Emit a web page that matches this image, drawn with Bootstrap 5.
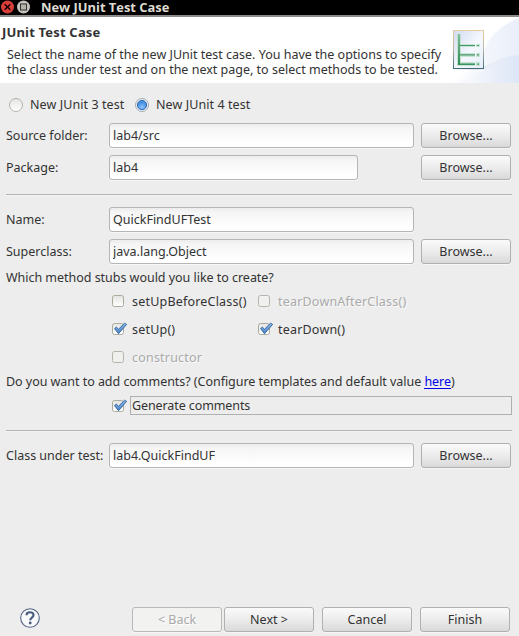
<!DOCTYPE html>
<html lang="en">
<head>
<meta charset="utf-8">
<meta name="viewport" content="width=device-width, initial-scale=1">
<title>New JUnit Test Case</title>
<link href="https://cdn.jsdelivr.net/npm/bootstrap@5.3.0/dist/css/bootstrap.min.css" rel="stylesheet">
<style>
  body { font-family: "Noto Sans", "Open Sans", sans-serif; font-size: 12.5px; line-height: 18px; color: #333; background: #ededed; }
  .dialog { width: 519px; height: 636px; }
  .titlebar { height: 17px; background: #000; border-bottom: 2px solid #8d8a88; color: #dfdbd2; font-family: "Open Sans", sans-serif; font-weight: 700; font-size: 12.9px; line-height: 15px; }
  .win-icons { width: 41px; height: 15px; }
  .banner { height: 66px; background: #fff; }
  .banner-title { font-weight: 700; padding: 6px 0 0 2px; line-height: 18px; font-size: 13px; letter-spacing: .18px; }
  .banner-copy { padding: 6px 0 0 7px; line-height: 15px; }
  .page { padding-left: 6px; }
  .versions { height: 40px; padding-top: 4px; }
  .version { width: 126px; letter-spacing: .08px; }
  .line { height: 25px; margin-bottom: 7px; padding-right: 8px; }
  .caption { width: 103px; }
  .form-control.field { width: 305px; height: 25px; min-height: 0; padding: 0 3px; font-size: inherit; line-height: 23px; color: #333; border: 1px solid #b5b5b5; border-radius: 3px; background: linear-gradient(#ececec 0, #f5f5f5 4px, #fff 20px); box-shadow: 0 1px 0 #f8f8f8; }
  .form-control.field-short { width: 249px; }
  .btn.push { width: 90px; height: 25px; padding: 0; font-size: inherit; line-height: 22px; color: #333; border: 1px solid #b0b0b0; border-radius: 3px; background: linear-gradient(#fafafa, #ececec 50%, #d9d9d9); box-shadow: 0 1px 0 #f6f6f6; }
  .btn.push:disabled { color: #a9a9a9; background: #f2f2f1; border-color: #b9b9b9; opacity: 1; text-shadow: 1px 1px #fff; }
  .btn.next { margin-left: 2px; }
  .rule { height: 2px; margin: 7px 7px 11px 0; background: linear-gradient(#b3b3b3 50%, #f4f4f4 50%); }
  .rule-low { margin-top: 15px; }
  .question { line-height: 13px; margin-bottom: 3px; letter-spacing: -.03px; }
  .question-low { line-height: 21px; margin-bottom: 4px; letter-spacing: -.04px; }
  .stubs { padding-left: 103px; }
  .stub { height: 28px; }
  .stub > .pick { width: 146px; }
  .pick span { margin: 1px 0 0 3px; letter-spacing: .2px; }
  .off { color: #aaa; text-shadow: 1px 1px #fafafa; }
  .tick { width: 20px; height: 18px; }
  .focus-row { height: 19px; padding-left: 103px; }
  .focus-box { width: 382px; height: 19px; border: 1px solid #b0b0b0; line-height: 17px; padding-left: 1px; margin-left: 1px; letter-spacing: -.1px; }
  .here { color: #00e; text-decoration: none; border-bottom: 1px solid #00e; line-height: 13px; display: inline-block; }
  .actions { height: 29px; padding: 0 9px 4px 14px; }
  .help { margin-bottom: 3px; }
</style>
<script src="https://cdn.jsdelivr.net/npm/bootstrap@5.3.0/dist/js/bootstrap.bundle.min.js" defer></script>
</head>
<body>
<svg width="0" height="0" class="d-block">
  <defs>
    <linearGradient id="boxFill" x2="0" y2="1"><stop stop-color="#e4e4e2"/><stop offset="1" stop-color="#fff"/></linearGradient>
    <linearGradient id="tickFill" x2="0" y2="1"><stop stop-color="#8bb9e8"/><stop offset="1" stop-color="#4a86c8"/></linearGradient>
    <radialGradient id="blue" cy=".75"><stop stop-color="#8cc5ff"/><stop offset="1" stop-color="#4a90e0"/></radialGradient>
    <g id="box"><rect x="3.5" y="3.5" width="11" height="11" rx="2" fill="url(#boxFill)" stroke="#a9ab9f"/></g>
    <g id="boxOff"><rect x="3.5" y="3.5" width="11" height="11" rx="2" fill="#f0f0ef" stroke="#b4b6ab"/></g>
    <g id="boxOn"><use href="#box"/><path d="M5.6 8.6 7.3 7.1 9.5 9.2 15.6 3.2 17.6 4.4 9.5 13.7Z" fill="url(#tickFill)" stroke="#2c5e9b" stroke-linejoin="round" stroke-width=".9"/></g>
  </defs>
</svg>
<main class="dialog d-flex flex-column overflow-hidden">
  <header class="titlebar d-flex flex-shrink-0">
    <svg class="win-icons flex-shrink-0" viewBox="0 0 41 15">
      <circle cx="7.5" cy="7" r="6.5" fill="#d93e3a"/><path d="m4.7 4.2 5.6 5.6m0-5.6-5.6 5.6" stroke="#1c0000" stroke-width="1.5"/>
      <circle cx="23.5" cy="7" r="6.5" fill="#c5c2bc"/><rect x="20.5" y="4" width="6" height="6" fill="#b5b2ac" stroke="#333"/>
    </svg>
    <span>New JUnit Test Case</span>
  </header>
  <section class="banner d-flex flex-shrink-0">
    <div class="flex-grow-1 text-nowrap">
      <div class="banner-title">JUnit Test Case</div>
      <div class="banner-copy">
        <div>Select the name of the new JUnit test case. You have the options to specify</div>
        <div>the class under test and on the next page, to select methods to be tested.</div>
      </div>
    </div>
    <svg class="flex-shrink-0" width="75" height="66" viewBox="444 17 75 66">
      <defs>
        <linearGradient id="sky" x1="0" x2="1"><stop stop-color="#fff"/><stop offset="1" stop-color="#dde5f6"/></linearGradient>
        <linearGradient id="paper" x2="1" y2="1"><stop stop-color="#d2dbef"/><stop offset=".55" stop-color="#f5f8fe"/><stop offset="1" stop-color="#e6edfa"/></linearGradient>
        <linearGradient id="frame" x2="0" y2="1"><stop stop-color="#e5cd9e"/><stop offset=".5" stop-color="#b8b7a5"/><stop offset="1" stop-color="#426d75"/></linearGradient>
        <linearGradient id="stem" gradientUnits="userSpaceOnUse" x1="0" y1="34" x2="0" y2="65"><stop stop-color="#83bf9b"/><stop offset="1" stop-color="#2b8c55"/></linearGradient>
        <linearGradient id="shade" x1="0" x2="1"><stop stop-color="#a9a4bd"/><stop offset="1" stop-color="#e4e7f4" stop-opacity="0"/></linearGradient>
      </defs>
      <path d="M484 50C491 34 503 24 519 18V83H448C462 77 476 68 484 50Z" fill="url(#sky)" opacity=".65"/>
      <path d="M450 83C470 79 488 70 496 61 503 57 511 56 519 55V83Z" fill="url(#sky)"/>
      <path d="M484 66 505 57Q493 68 482 70L452 69Z" fill="url(#shade)" opacity=".75"/>
      <rect x="453.5" y="30.5" width="30" height="38" fill="url(#paper)" stroke="url(#frame)"/>
      <path d="M457 34h4v32h-4zM461 44h14v3h-14zM461 53h14v4h-14zM461 62h14v4h-14zM476 44h4v3h-4zM476 53h4v4h-4zM476 62h4v4h-4z" fill="#b9dfc6" opacity=".75"/>
      <path d="M458 34h2v31h-2z" fill="url(#stem)"/>
      <path d="M459 45.5h16M459 54.8h16M477 45.5h2M477 54.8h2M477 64.2h2" stroke="#46986a" stroke-width="1.2"/>
      <path d="M458 64.2h17" stroke="#2b8c55" stroke-width="1.4"/>
    </svg>
  </section>

  <form class="page flex-grow-1 d-flex flex-column">
    <div class="versions d-flex text-nowrap align-items-center">
      <div class="version d-flex align-items-center">
        <svg class="flex-shrink-0" width="24" height="18" viewBox="6 96 24 18"><circle cx="16" cy="105" r="6.5" fill="url(#boxFill)" stroke="#b2b4a8"/></svg>
        <span>New JUnit 3 test</span>
      </div>
      <div class="version d-flex align-items-center">
        <svg class="flex-shrink-0" width="24" height="18" viewBox="132 96 24 18"><circle cx="142" cy="105" r="6.5" fill="#eee" stroke="#a3adb6"/><circle cx="142" cy="105" r="4.6" fill="url(#blue)" stroke="#2f6db5"/></svg>
        <span>New JUnit 4 test</span>
      </div>
    </div>
    <div class="line d-flex align-items-center">
      <label class="caption" for="src">Source folder:</label><input id="src" class="form-control field" value="lab4/src"><button type="button" class="btn push ms-auto">Browse...</button>
    </div>
    <div class="line d-flex align-items-center">
      <label class="caption" for="pkg">Package:</label><input id="pkg" class="form-control field field-short" value="lab4"><button type="button" class="btn push ms-auto">Browse...</button>
    </div>
    <div class="rule"></div>
    <div class="line d-flex align-items-center">
      <label class="caption" for="name">Name:</label><input id="name" class="form-control field" value="QuickFindUFTest">
    </div>
    <div class="line d-flex align-items-center">
      <label class="caption" for="super">Superclass:</label><input id="super" class="form-control field" value="java.lang.Object"><button type="button" class="btn push ms-auto">Browse...</button>
    </div>
    <div class="question">Which method stubs would you like to create?</div>
    <div class="stubs text-nowrap">
      <div class="stub d-flex">
        <div class="pick d-flex align-items-center"><svg class="tick flex-shrink-0"><use href="#box"/></svg><span>setUpBeforeClass()</span></div>
        <div class="pick off d-flex align-items-center"><svg class="tick flex-shrink-0"><use href="#boxOff"/></svg><span>tearDownAfterClass()</span></div>
      </div>
      <div class="stub d-flex">
        <div class="pick d-flex align-items-center"><svg class="tick flex-shrink-0"><use href="#boxOn"/></svg><span>setUp()</span></div>
        <div class="pick d-flex align-items-center"><svg class="tick flex-shrink-0"><use href="#boxOn"/></svg><span>tearDown()</span></div>
      </div>
      <div class="stub d-flex">
        <div class="pick off d-flex align-items-center"><svg class="tick flex-shrink-0"><use href="#boxOff"/></svg><span>constructor</span></div>
      </div>
    </div>
    <div class="question-low text-nowrap">Do you want to add comments? (Configure templates and default value <a class="here" href="#">here</a>)</div>
    <div class="focus-row d-flex align-items-center">
      <svg class="tick flex-shrink-0"><use href="#boxOn"/></svg><div class="focus-box">Generate comments</div>
    </div>
    <div class="rule rule-low"></div>
    <div class="line d-flex align-items-center text-nowrap">
      <label class="caption" for="cut">Class under test:</label><input id="cut" class="form-control field" value="lab4.QuickFindUF"><button type="button" class="btn push ms-auto">Browse...</button>
    </div>
    <footer class="actions mt-auto d-flex align-items-center">
      <svg class="help me-auto" width="20" height="20" viewBox="0 0 20 20"><circle cx="10" cy="10" r="9.3" fill="#f8f9fb" stroke="#536585" stroke-width="1.1"/><path d="M6.5 7.2C6.5 3.3 13.5 3.3 13.5 7.1 13.5 9.7 10.2 9.4 10.2 12.3" fill="none" stroke="#4a5d80" stroke-width="2.2"/><circle cx="10.2" cy="15" r="1.4" fill="#4a5d80"/></svg>
      <button type="button" class="btn push" disabled>&lt; Back</button>
      <button type="button" class="btn push next">Next &gt;</button>
      <button type="button" class="btn push ms-2">Cancel</button>
      <button type="button" class="btn push ms-2">Finish</button>
    </footer>
  </form>
</main>
</body>
</html>
